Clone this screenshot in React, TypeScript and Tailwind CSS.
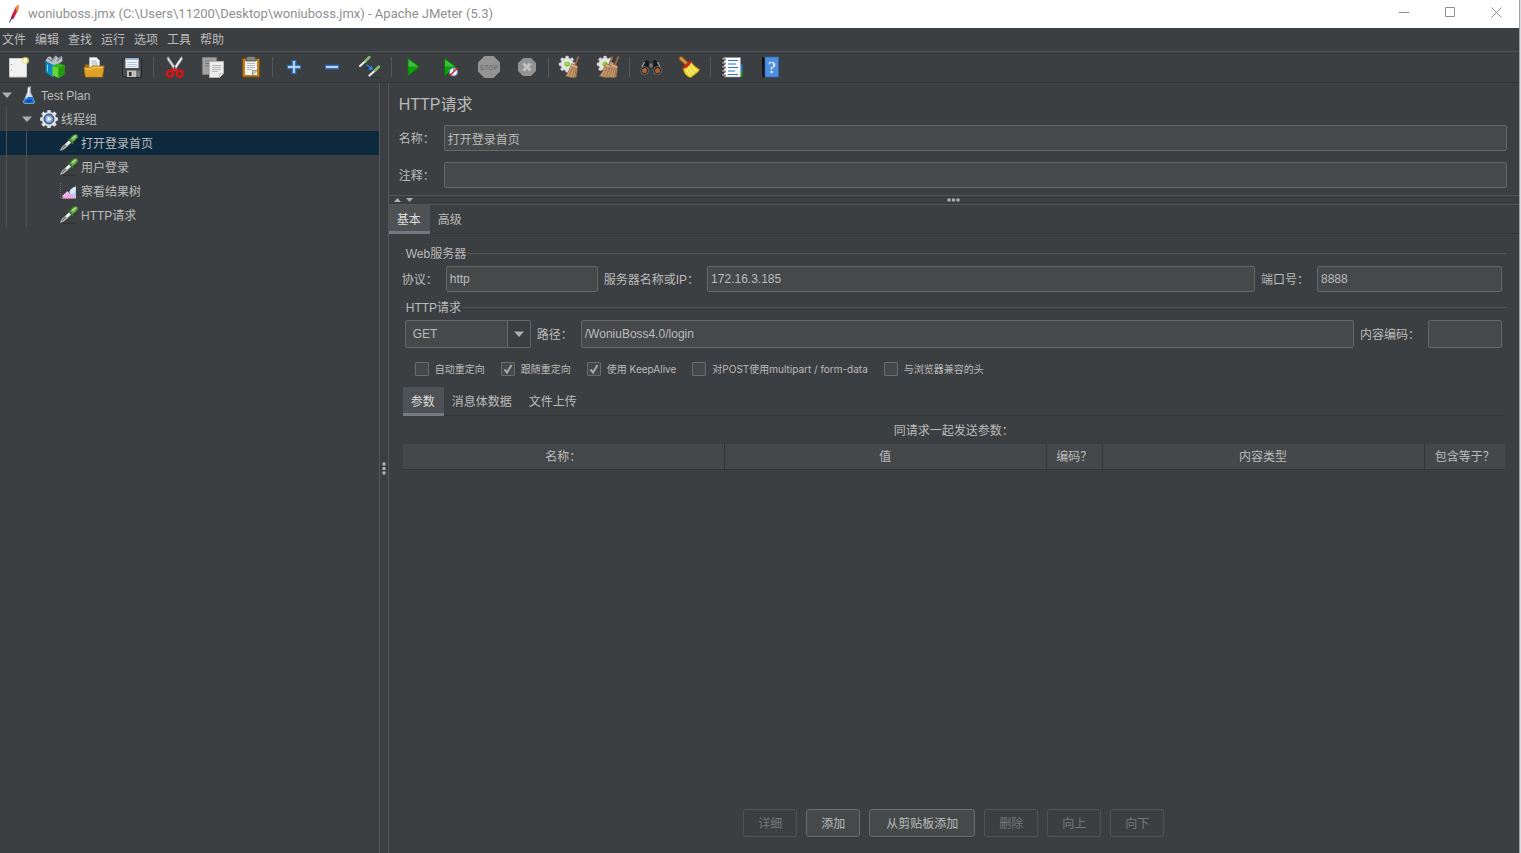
import { useId, useState } from "react";
import type { ReactNode } from "react";

function Pipette() {
  return (
    <>
      <path d="M2 17.300h13" stroke="#2a2c2e" strokeWidth="1.400" opacity=".7" />
      <path d="M0 16.800 2 12.800 9.500 6l2.300 2.300L4 15.200z" fill="#dfe1df" stroke="#777b78" strokeWidth=".7" />
      <path d="M2.200 14.600 6 11" stroke="#5f6361" strokeWidth="1.300" />
      <path d="M6.500 10.200 10 7" stroke="#fff" strokeWidth="1.200" />
      <path d="m8.500 4.800 4.700 4.700" stroke="#3f7a2c" strokeWidth="1.800" />
      <path d="M10 5.500c.8-2 3-4.800 5.300-5C17.500.300 18.300 2 17.200 3.800c-1 1.700-2.900 3-4.600 4.100z" fill="#6fb553" stroke="#3f7f2d" strokeWidth=".7" />
      <path d="m12.500 4.500 3-2.500" stroke="#b4e39b" strokeWidth="1.100" />
    </>
  );
}

const GEAR =
  "M7.600 0h2.800l.5 2.300 1.600.7 2-1.300 2 2-1.300 2 .7 1.600 2.100.4v2.800l-2.100.5-.7 1.600 1.300 2-2 2-2-1.300-1.600.7-.5 2.100H7.600l-.5-2.100-1.600-.7-2 1.300-2-2 1.300-2-.7-1.600L0 10.500V7.700l2.100-.4.7-1.600-1.300-2 2-2 2 1.300 1.600-.7z";

const treeIcons: Record<string, ReactNode> = {
  plan: (
    <>
      <path d="M8 1h2.500v5l4 9.500c.3 1.200-.2 2-1.500 2H5c-1.300 0-1.800-.8-1.500-2L7.500 6z" fill="#cfd8e2" stroke="#8fa0b3" strokeWidth=".7" />
      <path d="M6 11h6.500l1.700 4.500c.2 1-.3 1.600-1.200 1.600H5c-.9 0-1.400-.6-1.200-1.600z" fill="#1673e0" />
      <path d="M8.700 2v5L6.200 13" fill="none" stroke="#fff" strokeWidth="1" />
      <ellipse cx="9" cy="15" rx="3" ry="1.500" fill="#0b4db0" />
      <path d="M10.500 0v2" stroke="#9aa" />
    </>
  ),
  threads: (
    <>
      <path d={GEAR} fill="#e4e6e8" stroke="#a9b2bd" strokeWidth=".6" />
      <circle cx="9" cy="9" r="5" fill="#5d7fb5" stroke="#2f4b7d" strokeWidth="1" />
      <circle cx="9" cy="9" r="3.400" fill="#8fb0dd" />
      <path d="m7.400 6.500 4.200 2.500-4.200 2.500z" fill="#fff" />
    </>
  ),
  sampler: <Pipette />,
  results: (
    <>
      <path d="M.5 1v15.500H17" fill="none" stroke="#66696b" strokeWidth="1" strokeDasharray="1 1" />
      <path d="M16 5v11h-6V9.500z" fill="#a9cdf7" />
      <path d="M9.500 10c0-2 3-5 6.500-5.500 0 4-1.500 7-3.500 7.500-1.500.3-3-.5-3-2z" fill="#d6e8fc" />
      <path d="M2.500 16.500v-3L5.500 11l2-2 2 2.500 2 1.500 2 .5 2 2v1z" fill="#f3a4e2" />
      <path d="m3.500 14 4-3.500 2 2" fill="none" stroke="#fde3f8" />
    </>
  ),
};

const tree = [
  { label: "Test Plan", icon: "plan", level: 0, open: true },
  { label: "线程组", icon: "threads", level: 1, open: true },
  { label: "打开登录首页", icon: "sampler", level: 2 },
  { label: "用户登录", icon: "sampler", level: 2 },
  { label: "察看结果树", icon: "results", level: 2 },
  { label: "HTTP请求", icon: "sampler", level: 2 },
];

const broom = (
  <>
    <path d="m20.500 1.500-3.700 9" stroke="#9a6b40" strokeWidth="1.800" />
    <path d="m13.500 8.500 6 2.500-1.200 11-3.500.8-7.300-1.800c3-3 4-7 6-12.500z" fill="#c79a6e" stroke="#8b623a" strokeWidth=".6" />
    <path d="m14.500 12-3 9M16.500 12.500l-2 9.500M18 13l-1 9" stroke="#8a6440" strokeWidth=".7" />
    <path d="m13.700 9.800 5.400 2.400" stroke="#e0bc92" strokeWidth="1" />
  </>
);

const smallGear = (
  <g transform="translate(1 1) scale(.9)">
    <path d={GEAR} fill="#dedede" stroke="#b5b5b5" strokeWidth=".5" />
    <circle cx="9" cy="9" r="5" fill="#e9e9e9" />
    <circle cx="9" cy="9" r="3" fill="#7fc52b" />
    <circle cx="9" cy="8.500" r="1.500" fill="#a6e052" />
  </g>
);

type Tool = { label: string; art: ReactNode; disabled?: boolean };

const toolGroups: Tool[][] = [
  [
    {
      label: "新建",
      art: (
        <>
          <path d="M3.500 3.500h17v18.500h-17z" fill="#f1f1f1" stroke="#c9c9c9" />
          <path d="M5.500 5v16" stroke="#fff" />
          <path d="M5.500 9v1M5.500 15v1" stroke="#999" />
          <circle cx="19.500" cy="5.500" r="3.600" fill="#f6e36c" opacity=".75" />
          <circle cx="19.500" cy="5.500" r="1.900" fill="#fffef0" />
        </>
      ),
    },
    {
      label: "模板",
      art: (
        <>
          <path d="m1.500 6 7 3v13l-7-4.500z" fill="#0f86c4" />
          <path d="m8.500 9 4-2v13l-4 2z" fill="#2fb0e8" />
          <path d="M1.500 6c1-3 3-5 5-4.500L8 4l4-3.500L14 3l4-2 .5 5-4 3-6 .5z" fill="#b7bfc4" />
          <path d="M4 3.500 8 6l3-4M13 6l4-4" fill="none" stroke="#71838c" strokeWidth="1.300" />
          <path d="m8.500 11.500 5-3 7 1.500v9.500l-6 3.500-6-3z" fill="#37b51b" />
          <path d="m8.500 11.500 6 1.500v10l-6-3z" fill="#64d63a" />
          <path d="m14.500 13 6-3v9.500l-6 3.500z" fill="#239a10" />
          <path d="M3.500 9.500v7" stroke="#7fd3f4" />
        </>
      ),
    },
    {
      label: "打开",
      art: (
        <>
          <path d="M3 9.500h5l1.500 2H20V18H3z" fill="#a5710f" />
          <path d="M7.500 2.500h7l3 3V16h-10z" fill="#f4f4f4" stroke="#bdbdbd" strokeWidth=".7" />
          <path d="M9.500 6h5M9.500 8h6M9.500 10h6" stroke="#a9a9a9" strokeWidth=".9" />
          <path d="M2 12.500h6.500l1.500-1.500H22l-1.500 11h-17z" fill="#dfa126" stroke="#b67c12" strokeWidth=".8" />
          <path d="M3.500 14h6l1.500-1.500h9.500" fill="none" stroke="#f8cf72" />
        </>
      ),
    },
    {
      label: "保存",
      art: (
        <>
          <path d="M2.500 3.500h19v18.500H4L2.500 20.500z" fill="#4a4a4a" stroke="#262626" />
          <path d="M5.500 3h13v10h-13z" fill="#f2f6fa" />
          <path d="M5.500 3h13v1.800h-13z" fill="#8eb2d6" />
          <path d="M7 7.500h10M7 9.500h10M7 11.500h10" stroke="#a3bfdb" strokeWidth=".9" />
          <path d="M7 15.500h9.500V22H7z" fill="#c2c2bd" />
          <path d="M9 17h2.500v4H9z" fill="#333" />
          <path d="M17.500 15.500H20V22h-2.500z" fill="#777" />
        </>
      ),
    },
  ],
  [
    {
      label: "剪切",
      art: (
        <>
          <path d="M5 1.500 14 14.500l-2 1.500L4 4z" fill="#d8d8d8" stroke="#979797" strokeWidth=".5" />
          <path d="m18.500 1.500-9 13 2 1.500L19.500 4z" fill="#f0f0f0" stroke="#979797" strokeWidth=".5" />
          <circle cx="11.800" cy="12.500" r=".9" fill="#555" />
          <ellipse cx="7" cy="18.700" rx="3" ry="3.200" fill="none" stroke="#d91313" strokeWidth="2.400" />
          <ellipse cx="16.700" cy="18.700" rx="3" ry="3.200" fill="none" stroke="#d91313" strokeWidth="2.400" />
          <path d="m9 16 2.500-2 3 2" fill="none" stroke="#d91313" strokeWidth="2.200" />
        </>
      ),
    },
    {
      label: "复制",
      art: (
        <>
          <path d="M1.500 2.500h14v17h-14z" fill="#a2a2a2" stroke="#7d7d7d" />
          <path d="M4 6h8M4 8.500h8M4 11h8" stroke="#777" />
          <path d="M8.500 6.500h14v12l-4 4h-10z" fill="#ededed" stroke="#b5b5b5" />
          <path d="M11 10.500h9M11 12.500h9M11 14.500h9M11 16.500h6" stroke="#b0b0b0" strokeWidth=".9" />
          <path d="m22.500 18.500-4 4v-4z" fill="#fff" stroke="#aaa" strokeWidth=".7" />
        </>
      ),
    },
    {
      label: "粘贴",
      art: (
        <>
          <path d="M3.500 3.500h17V22h-17z" fill="#c07d1c" stroke="#7f4f0b" />
          <path d="M6 6h12v14H6z" fill="#f3f3f3" />
          <path d="M8 8.500h8M8 10.500h8M8 12.500h8M8 14.500h5" stroke="#aeb2b4" strokeWidth=".9" />
          <path d="m18 15.500-4.500 4.500v-4.500z" fill="#d2d2d2" stroke="#777" strokeWidth=".7" />
          <path d="M7 3.500 9 1.500h6l2 2V6H7z" fill="#858780" stroke="#494a45" strokeWidth=".8" />
        </>
      ),
    },
  ],
  [
    {
      label: "全部展开",
      art: (
        <>
          <path d="M12 5v14M5 12h14" stroke="#3471ba" strokeWidth="4.600" />
          <path d="M12 6v12M6 12h12" stroke="#b4d4f5" strokeWidth="2" />
        </>
      ),
    },
    {
      label: "全部折叠",
      art: (
        <>
          <path d="M5 12h14" stroke="#3471ba" strokeWidth="4.600" />
          <path d="M6 12h12" stroke="#b4d4f5" strokeWidth="2" />
        </>
      ),
    },
    {
      label: "切换",
      art: (
        <>
          <path d="M5 13h7M13 22.500h8" stroke="#292b2d" strokeWidth="1.200" opacity=".6" />
          <path d="m2 11 5.500-5" stroke="#e9e9e9" strokeWidth="2.200" strokeLinecap="round" />
          <path d="m7.500 6 3.800-3.800" stroke="#86bb6b" strokeWidth="2.800" strokeLinecap="round" />
          <path d="m11.500 20.500 5.500-5" stroke="#e9e9e9" strokeWidth="2.200" strokeLinecap="round" />
          <path d="m17 15.500 3.800-3.800" stroke="#86bb6b" strokeWidth="2.800" strokeLinecap="round" />
          <path d="m8.500 9.500 4 3.500" stroke="#2678d8" strokeWidth="1.500" />
          <path d="m14.800 15-4.800-.5 4-4z" fill="#2f83e5" />
        </>
      ),
    },
  ],
  [
    {
      label: "启动",
      art: (
        <>
          <path d="M7 3 18.500 12 7 21z" fill="#0da00d" stroke="#087508" strokeWidth=".8" />
          <path d="M7.500 4.500 17 11.500H7.500z" fill="#42bd3b" />
        </>
      ),
    },
    {
      label: "不停顿开始",
      art: (
        <>
          <path d="M5.500 3 17 12 5.500 21z" fill="#0da00d" stroke="#087508" strokeWidth=".8" />
          <path d="M6 4.500 15.500 11.500H6z" fill="#42bd3b" />
          <circle cx="14.500" cy="17" r="4" fill="#f4f7fb" stroke="#5a86c5" strokeWidth="1.100" />
          <path d="M14.500 17V14" stroke="#6d89ad" />
          <path d="m10.500 21 8-8" stroke="#e01818" strokeWidth="1.500" />
        </>
      ),
    },
    {
      label: "停止",
      disabled: true,
      art: (
        <>
          <path d="M7.500 1h9l6.500 6.500v9L16.500 23h-9L1 16.500v-9z" fill="#949494" />
          <text x="12" y="15" textAnchor="middle" fontSize="7" fontWeight="bold" fill="#747474">STOP</text>
        </>
      ),
    },
    {
      label: "关闭",
      disabled: true,
      art: (
        <>
          <path d="M8.500 3h7.500l5 5v8l-5 5H8l-5-5V8z" fill="#929292" />
          <path d="m8.500 8.500 7 7m0-7-7 7" stroke="#c2c2c2" strokeWidth="3" />
        </>
      ),
    },
  ],
  [
    { label: "清除", art: <>{smallGear}{broom}</> },
    {
      label: "清除全部",
      art: (
        <>
          {smallGear}
          <g transform="translate(-4 0)">{broom}</g>
          <g transform="translate(2 0)">{broom}</g>
        </>
      ),
    },
  ],
  [
    {
      label: "查找",
      art: (
        <>
          <path d="M5 6.500 8 4.500l2.500 1.500L9.500 17 2 17.500c-1.500-2-1.200-4.500 0-6z" fill="#191919" stroke="#4b4b4b" strokeWidth=".6" />
          <path d="M19 6.500 16 4.500 13.500 6l1 11 7.500.5c1.500-2 1.200-4.500 0-6z" fill="#191919" stroke="#4b4b4b" strokeWidth=".6" />
          <path d="M10 8h4v5h-4z" fill="#777" stroke="#222" strokeWidth=".7" />
          <path d="m5.500 7-2.500 5M18.500 7l2.500 5" stroke="#aaa" strokeWidth="1.200" />
          <circle cx="5.500" cy="15.500" r="4" fill="#151515" stroke="#858585" strokeWidth=".8" />
          <circle cx="18.500" cy="15.500" r="4" fill="#151515" stroke="#858585" strokeWidth=".8" />
          <circle cx="5.500" cy="15.500" r="2.600" fill="#a9602c" />
          <circle cx="18.500" cy="15.500" r="2.600" fill="#a9602c" />
        </>
      ),
    },
    {
      label: "重置搜索",
      art: (
        <>
          <path d="m4 3.500 5 4.500" stroke="#8d5418" strokeWidth="4.500" strokeLinecap="round" />
          <path d="m4 3.500 4.500 4" stroke="#d59342" strokeWidth="2.800" strokeLinecap="round" />
          <path d="M14 6.500c2 4 5 5.500 8.500 8l-1.500 2.500-7 5.500-2.500-.5-3-2.500c-1.500-2-2-4-2.500-7z" fill="#f0d52c" stroke="#a68b0a" strokeWidth=".7" />
          <path d="M8.500 12.500c1 3 2.500 5 5 8M11 11c1 3 3 5 5.500 7.500M13 9c1.500 3 4 5 6.500 7" stroke="#fdf29c" strokeWidth="1.200" />
          <path d="M6 12.500c3.500-.7 6-2.800 7.500-6.500" stroke="#d31f17" strokeWidth="2.600" />
        </>
      ),
    },
  ],
  [
    {
      label: "函数助手对话框",
      art: (
        <>
          <path d="M19 9.500h3.500V16H19z" fill="#2677e6" />
          <path d="M19 16h3.500v5.500H19z" fill="#1e9a15" />
          <path d="M4 2.500h16.500V22H4z" fill="#fbfbfb" stroke="#999" strokeWidth=".6" />
          <path d="M8 5.500h10M8 9h8M8 12.500h10M8 16h7M8 19.500h10" stroke="#2f73d0" strokeWidth="1.200" />
          <path d="M1.500 4.500h4M1.500 8.500h4M1.500 12.500h4M1.500 16.500h4M1.500 20.500h4" stroke="#161616" strokeWidth="2.200" />
          <path d="M2 4h3M2 8h3M2 12h3M2 16h3M2 20h3" stroke="#e5e5e5" strokeWidth="1" />
        </>
      ),
    },
    {
      label: "帮助",
      art: (
        <>
          <path d="M4 2.500 7 2v20.500H4.500z" fill="#0e0e0e" />
          <path d="M7 2h13.500v20H7z" fill="#4f8fe0" stroke="#2f67b4" strokeWidth=".8" />
          <text x="13.700" y="18" textAnchor="middle" fontSize="17" fontFamily="Liberation Serif" fill="#fff">?</text>
        </>
      ),
    },
  ],
];

const menus = ["文件", "编辑", "查找", "运行", "选项", "工具", "帮助"];

const options = [
  { label: "自动重定向", checked: false },
  { label: "跟随重定向", checked: true },
  { label: "使用 KeepAlive", checked: true },
  { label: "对POST使用multipart / form-data", checked: false },
  { label: "与浏览器兼容的头", checked: false },
];

const actions = [
  { label: "详细", enabled: false },
  { label: "添加", enabled: true },
  { label: "从剪贴板添加", enabled: true },
  { label: "删除", enabled: false },
  { label: "向上", enabled: false },
  { label: "向下", enabled: false },
];

function TitleBar() {
  return (
    <header className="flex h-7 shrink-0 items-center bg-white pl-[6px] text-[#8f8f8f]">
      <svg width="16" height="20" viewBox="0 0 16 20" aria-hidden="true">
        <path d="M9.500 3.500 12.500.8l-.3 5-4.700 9-3 1 1.500-5z" fill="#cf2340" />
        <path d="m9.500 3.500 3-2.700-.3 5-2 1.500z" fill="#f08a24" />
        <path d="m6.500 10-1.500 5 2.500-.5" fill="#8b1d75" />
        <path d="m5 15-1.500 3.500" stroke="#3b2b7a" strokeWidth="1" />
      </svg>
      <h1 className="ml-[6px] flex-1 font-[Roboto,sans-serif] text-[13px]">
        woniuboss.jmx (C:\Users\11200\Desktop\woniuboss.jmx) - Apache JMeter (5.3)
      </h1>
      <button type="button" aria-label="最小化" className="grid h-7 w-[46px] place-items-center pb-1">
        <svg width="11" height="11" stroke="currentColor"><path d="M0 5.500h10" /></svg>
      </button>
      <button type="button" aria-label="最大化" className="grid h-7 w-[46px] place-items-center pb-1">
        <svg width="11" height="11" fill="none" stroke="currentColor"><path d="M.5.500h9v9h-9z" /></svg>
      </button>
      <button type="button" aria-label="关闭" className="grid h-7 w-[46px] place-items-center pb-1">
        <svg width="11" height="11" stroke="currentColor"><path d="m.5.500 10 10m0-10-10 10" /></svg>
      </button>
    </header>
  );
}

function Toolbar() {
  return (
    <div className="-ml-px flex h-[31px] shrink-0 items-center border-b border-[#323537]" role="toolbar">
      {toolGroups.map((group, i) => (
        <div key={i} className="flex items-center">
          {i > 0 && <span className="mx-[2px] h-5 w-px bg-[#55585a]" />}
          {group.map((tool) => (
            <button
              key={tool.label}
              type="button"
              aria-label={tool.label}
              title={tool.label}
              disabled={tool.disabled}
              className="flex h-[30px] w-[38px] items-center justify-center"
            >
              <svg width="24" height="24" viewBox="0 0 24 24" fill="none">{tool.art}</svg>
            </button>
          ))}
        </div>
      ))}
    </div>
  );
}

function TestTree({ selected, onSelect }: { selected: number; onSelect: (i: number) => void }) {
  return (
    <nav className="w-1/4 max-w-[380px] shrink-0 border-r border-[#555555]">
      <ul>
        {tree.map((node, i) => (
          <li key={i}>
            <button
              type="button"
              onClick={() => onSelect(i)}
              className={`flex h-6 w-full items-center text-left ${i === selected ? "bg-[#0d293e]" : ""}`}
            >
              {Array.from({ length: node.level }, (_, n) => (
                <span key={n} className="h-6 w-5 shrink-0 pl-[6px]">
                  <span className="block h-6 w-px bg-[#505355]" />
                </span>
              ))}
              <span className="w-5 shrink-0 pl-[2px]">
                {node.open && (
                  <svg width="10" height="6" className="fill-[#adadad]"><path d="M0 .5h10L5 6z" /></svg>
                )}
              </span>
              <svg width="18" height="18" viewBox="0 0 18 18" fill="none" className="mr-[3px] shrink-0">
                {treeIcons[node.icon]}
              </svg>
              <span className="pt-[2px]">{node.label}</span>
            </button>
          </li>
        ))}
      </ul>
    </nav>
  );
}

function Tabs({ items }: { items: string[] }) {
  const [active, setActive] = useState(items[0]);
  return (
    <div role="tablist" className="flex h-[29px] border-b border-[#323537]">
      {items.map((item) => (
        <button
          key={item}
          type="button"
          role="tab"
          aria-selected={item === active}
          onClick={() => setActive(item)}
          className={`h-[29px] border-b-[3px] pt-1 pr-[9px] pl-2 ${
            item === active ? "border-[#747a80] bg-[#4e5254] text-[#dddddd]" : "border-transparent"
          }`}
        >
          {item}
        </button>
      ))}
    </div>
  );
}

const field = "min-w-0 rounded-[2px] border border-[#646667] bg-[#45494a] px-[3px] text-[#bbbbbb] outline-none focus:border-[#466d94]";

function TextField({ label, value = "", className, labelClass = "mr-2" }: {
  label: string;
  value?: string;
  className: string;
  labelClass?: string;
}) {
  const id = useId();
  return (
    <>
      <label htmlFor={id} className={`shrink-0 pt-[2px] ${labelClass}`}>{label}</label>
      <input id={id} type="text" defaultValue={value} className={`${field} ${className}`} />
    </>
  );
}

function Option({ label, checked }: { label: string; checked: boolean }) {
  return (
    <label className="flex items-center gap-[6px]">
      <span className="grid">
        <input
          type="checkbox"
          defaultChecked={checked}
          className="peer col-start-1 row-start-1 size-[14px] appearance-none rounded-[1px] border border-[#6b6b6b] bg-[#43494a]"
        />
        <svg
          viewBox="0 0 14 14"
          className="pointer-events-none invisible col-start-1 row-start-1 size-[14px] fill-none stroke-[#a7a7a7] stroke-2 peer-checked:visible"
        >
          <path d="m3.500 7.500 2.500 3 4.500-7.500" />
        </svg>
      </span>
      {label}
    </label>
  );
}

function RequestPanel() {
  return (
    <main className="flex min-w-0 flex-1 flex-col border-l border-[#555555]">
      <section className="pr-3 pb-[7px] pl-[10px]">
        <h2 className="flex h-[42px] items-center pt-px text-[16px]">HTTP请求</h2>
        <div className="flex items-center">
          <TextField label="名称：" value="打开登录首页" labelClass="w-[45px]" className="h-[26px] flex-1" />
        </div>
        <div className="mt-[11px] flex items-center">
          <TextField label="注释：" labelClass="w-[45px]" className="h-[26px] flex-1" />
        </div>
      </section>

      <div className="grid h-[10px] shrink-0 grid-cols-3 items-center border-y border-[#555555]">
        <span className="flex gap-[5px] pl-[5px]">
          <svg width="7" height="4" className="fill-[#adadad]"><path d="M0 4h7L3.500 0z" /></svg>
          <svg width="7" height="4" className="fill-[#adadad]"><path d="M0 0h7L3.500 4z" /></svg>
        </span>
        <svg width="13" height="4" className="justify-self-center fill-[#adadad]">
          <circle cx="2" cy="2" r="1.800" />
          <circle cx="6.500" cy="2" r="1.800" />
          <circle cx="11" cy="2" r="1.800" />
        </svg>
      </div>

      <Tabs items={["基本", "高级"]} />

      <div className="flex flex-1 flex-col px-3 pt-[10px] pb-4">
        <fieldset className="min-w-0 border-t border-[#555555] pt-1 pr-[5px] pl-px">
          <legend className="ml-[2px] px-[2px] pt-[2px] leading-4">Web服务器</legend>
          <div className="flex items-center">
            <TextField label="协议：" value="http" className="mr-[6px] h-[26px] w-[152px]" />
            <TextField label="服务器名称或IP：" value="172.16.3.185" className="mr-[6px] h-[26px] flex-1" />
            <TextField label="端口号：" value="8888" className="h-[26px] w-[185px]" />
          </div>
        </fieldset>

        <fieldset className="mt-[6px] min-w-0 border-t border-[#555555] pt-1 pr-[5px] pl-1">
          <legend className="-ml-px px-[2px] pt-[2px] leading-4">HTTP请求</legend>
          <div className="flex items-center">
            <span className="relative mr-[6px]">
              <select aria-label="方法" className="h-7 w-[126px] appearance-none rounded-[2px] border border-[#646667] bg-[#45494a] px-[7px] text-[#bbbbbb] outline-none">
                <option>GET</option>
                <option>POST</option>
                <option>PUT</option>
                <option>DELETE</option>
              </select>
              <span className="pointer-events-none absolute top-px right-px bottom-px grid w-[23px] place-items-center border-l border-[#646667] bg-[#3c3f41]">
                <svg width="10" height="6" className="fill-[#adadad]"><path d="M0 .5h10L5 6z" /></svg>
              </span>
            </span>
            <TextField label="路径：" value="/WoniuBoss4.0/login" className="mr-[6px] h-7 flex-1" />
            <TextField label="内容编码：" className="h-7 w-[74px]" />
          </div>
          <div className="mt-[14px] flex gap-4 pl-[10px] font-['Inter','Noto_Sans_CJK_SC',sans-serif] text-[10px] leading-[14px]">
            {options.map((option) => (
              <Option key={option.label} {...option} />
            ))}
          </div>
        </fieldset>

        <div className="mt-[11px] flex flex-1 flex-col px-[2px]">
          <Tabs items={["参数", "消息体数据", "文件上传"]} />
          <table className="w-full table-fixed border-collapse">
            <caption className="h-7 pt-[2px] leading-[26px]">同请求一起发送参数：</caption>
            <thead>
              <tr className="h-[25px] border-b border-[#323537] bg-[#45484a]">
                <th className="border-r border-[#323537] p-0 pt-[2px] font-normal">名称：</th>
                <th className="border-r border-[#323537] p-0 pt-[2px] font-normal">值</th>
                <th className="w-14 border-r border-[#323537] p-0 pt-[2px] font-normal">编码？</th>
                <th className="border-r border-[#323537] p-0 pt-[2px] font-normal">内容类型</th>
                <th className="w-[81px] p-0 pt-[2px] font-normal">包含等于？</th>
              </tr>
            </thead>
          </table>
        </div>

        <div className="flex justify-center gap-[9px]">
          {actions.map(({ label, enabled }) => (
            <button
              key={label}
              type="button"
              disabled={!enabled}
              className={`h-7 min-w-[54px] rounded-[3px] border pt-[2px] ${label.length > 2 ? "px-4" : ""} ${
                enabled
                  ? "border-[#6a6c6d] bg-[#45494a] shadow-[0_1px_0_#343739]"
                  : "border-[#515456] text-[#777777]"
              }`}
            >
              {label}
            </button>
          ))}
        </div>
      </div>
    </main>
  );
}

export default function App() {
  const [selected, setSelected] = useState(2);

  return (
    <div className="min-h-screen bg-[#dcdcde] pr-px">
      <div className="flex min-h-screen flex-col border-r border-[#a0a0a3] bg-[#3c3f41] font-['Liberation_Sans','Noto_Sans_CJK_SC',sans-serif] text-[12px] leading-4 text-[#bbbbbb]">
        <TitleBar />
        <nav className="flex h-6 shrink-0 items-center gap-[9px] border-b border-[#515558] pl-[2px]">
          {menus.map((menu) => (
            <button key={menu} type="button">{menu}</button>
          ))}
        </nav>
        <Toolbar />
        <div className="flex flex-1">
          <TestTree selected={selected} onSelect={setSelected} />
          <div className="flex w-2 shrink-0 items-center justify-center">
            <svg width="4" height="13" className="fill-[#adadad]">
              <circle cx="2" cy="2" r="1.800" />
              <circle cx="2" cy="6.500" r="1.800" />
              <circle cx="2" cy="11" r="1.800" />
            </svg>
          </div>
          <RequestPanel />
        </div>
      </div>
    </div>
  );
}
